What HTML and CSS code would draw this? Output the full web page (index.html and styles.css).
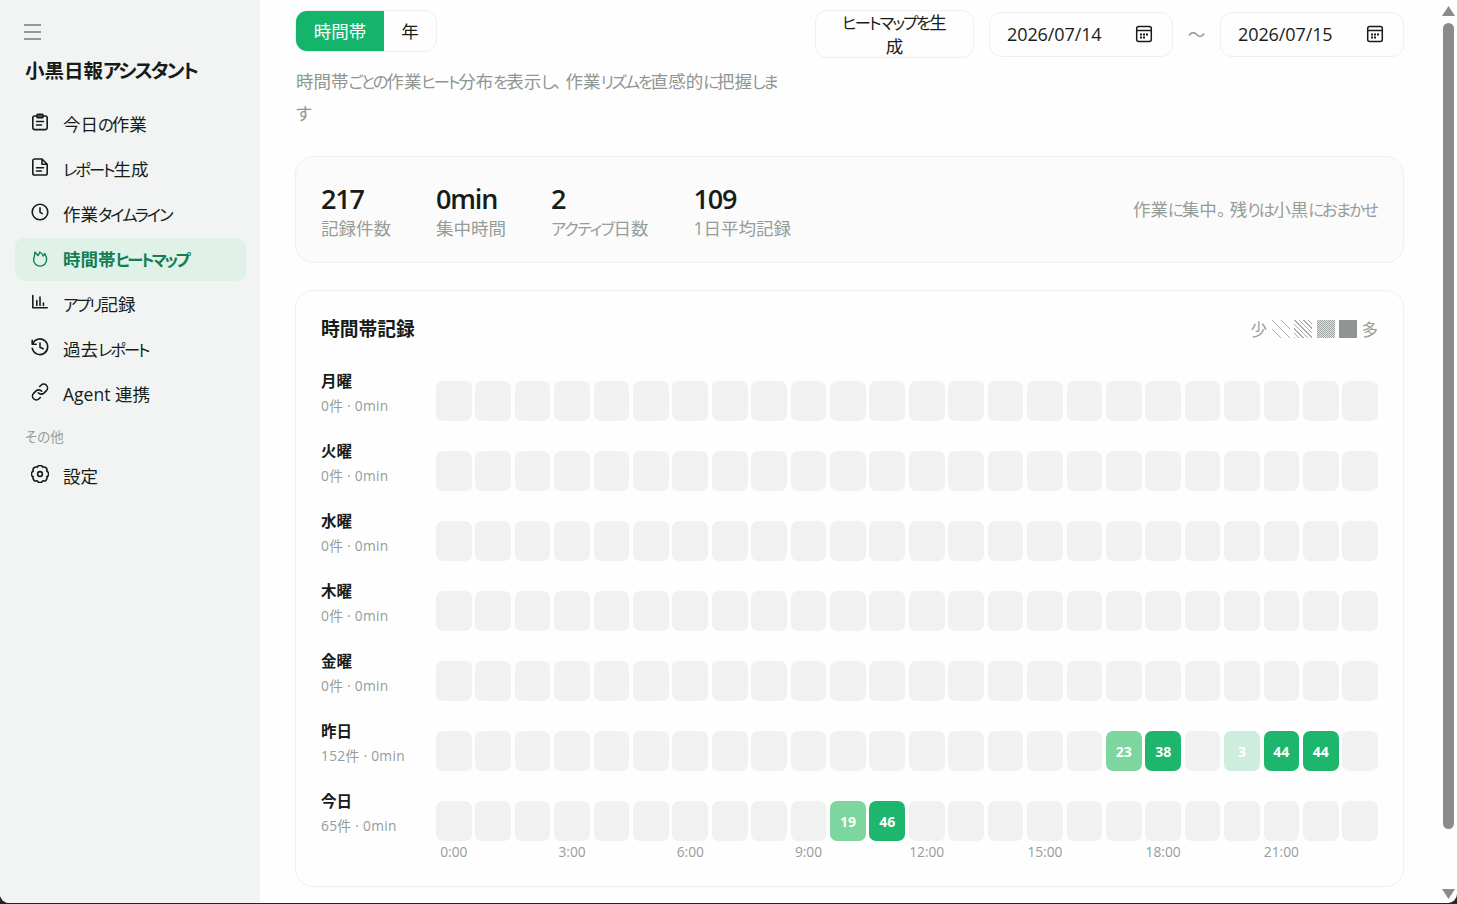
FILE: index.html
```html
<!DOCTYPE html>
<html lang="ja">
<head>
	<meta charset="utf-8">
	<meta name="viewport" content="width=device-width, initial-scale=1">
	<title>小黒日報アシスタント</title>
	<link rel="stylesheet" href="styles.css">
</head>
<body>
<div class="window">
	<aside class="sidebar">
		<button class="menu-btn"><i></i><i></i><i></i></button>
		<h1 class="brand">小黒日報<span class="kana">アシスタント</span></h1>
		<nav class="nav">
			<a class="nav-item">
				<svg class="icon" viewBox="0 0 18 18"><rect x="1.8" y="3" width="14.4" height="13.6" rx="2"/><rect x="6" y="1.2" width="6" height="3.6" rx=".8"/><path d="M5.5 8.5h7M5.5 12h5"/></svg>
				<span>今日<span class="kana">の</span>作業</span>
			</a>
			<a class="nav-item">
				<svg class="icon" viewBox="0 0 18 18"><path d="M11 1H3.6a1.8 1.8 0 0 0-1.8 1.8v12.4A1.8 1.8 0 0 0 3.6 17h10.8a1.8 1.8 0 0 0 1.8-1.8V6.2zM11 1v5.2h5.2M5.5 9.8h7M5.5 13h5"/></svg>
				<span><span class="kana">レポート</span>生成</span>
			</a>
			<a class="nav-item">
				<svg class="icon" viewBox="0 0 18 18"><circle cx="9" cy="9" r="7.8"/><path d="M9 4.8v4.4l2.2 1.4"/></svg>
				<span>作業<span class="kana">タイムライン</span></span>
			</a>
			<a class="nav-item active">
				<svg class="icon" viewBox="0 0 18 18"><path d="M3.8 2.200C5.300 3.200 6.200 4.200 6.800 5.600C8 4.800 8.600 3.600 8.800 2C10.600 3 11.700 4.300 12.200 6C13 5.400 13.400 4.600 13.500 3.500C15 5.400 15.600 7.400 15.600 9.600a6.500 6.500 0 0 1-13 0C2.600 8 3.900 6.500 3.800 2.200z"/></svg>
				<span>時間帯<span class="kana">ヒートマップ</span></span>
			</a>
			<a class="nav-item">
				<svg class="icon" viewBox="0 0 18 18"><path d="M1.800 2.500v12.200h14.400M5.800 7.500v5M9 4v8.500M12.400 10v2.500"/></svg>
				<span><span class="kana">アプリ</span>記録</span>
			</a>
			<a class="nav-item">
				<svg class="icon" viewBox="0 0 18 18"><path d="M1.200 2.200v4h4M1.500 6.200a7.800 7.800 0 1 1-.3 4M9 5v4.300l3 1.500"/></svg>
				<span>過去<span class="kana">レポート</span></span>
			</a>
			<a class="nav-item">
				<svg class="icon" viewBox="0 0 18 18"><path d="M7.300 9.800a3.900 3.900 0 0 0 5.600.3l2.500-2.500a3.800 3.800 0 0 0-5.400-5.400L8.700 3.500M10.700 8.200a3.900 3.900 0 0 0-5.600-.3l-2.500 2.500a3.800 3.800 0 0 0 5.400 5.400l1.300-1.300"/></svg>
				<span>Agent 連携</span>
			</a>
		</nav>
		<div class="nav-group">その他</div>
		<nav class="nav">
			<a class="nav-item">
				<svg class="icon" viewBox="0 0 18 18"><path d="M15.740 6.210A3 3 0 0 1 15.740 11.790A3 3 0 0 1 11.790 15.740A3 3 0 0 1 6.210 15.740A3 3 0 0 1 2.260 11.790A3 3 0 0 1 2.260 6.210A3 3 0 0 1 6.210 2.260A3 3 0 0 1 11.790 2.260A3 3 0 0 1 15.740 6.210z"/><circle cx="9" cy="9" r="2.400"/></svg>
				<span>設定</span>
			</a>
		</nav>
	</aside>

	<main class="main">
		<header class="header">
			<div class="intro">
				<div class="tabs">
					<button class="tab on">時間帯</button>
					<button class="tab">年</button>
				</div>
				<p class="desc">時間帯<span class="kana">ごとの</span>作業<span class="kana">ヒート</span>分布<span class="kana">を</span>表示<span class="kana">し</span><span class="punct">、</span>作業<span class="kana">リズムを</span>直感的<span class="kana">に</span>把握<span class="kana">しま</span><br>す</p>
			</div>
			<div class="tools">
				<button class="make-btn"><span class="kana">ヒートマップを</span>生<br>成</button>
				<div class="date">
					<span>2026/07/14</span>
					<svg class="cal" viewBox="0 0 18 18"><rect x="1.700" y="1.500" width="14.600" height="15" rx="2"/><path d="M2 5.500h14"/><path class="dots" d="M5 9.500h2M8 9.500h2M11 9.500h2M5 12.500h2M8 12.500h2"/></svg>
				</div>
				<span class="tilde">～</span>
				<div class="date">
					<span>2026/07/15</span>
					<svg class="cal" viewBox="0 0 18 18"><rect x="1.700" y="1.500" width="14.600" height="15" rx="2"/><path d="M2 5.500h14"/><path class="dots" d="M5 9.500h2M8 9.500h2M11 9.500h2M5 12.500h2M8 12.500h2"/></svg>
				</div>
			</div>
		</header>

		<section class="card stats">
			<div class="stat"><b>217</b><span>記録件数</span></div>
			<div class="stat"><b>0min</b><span>集中時間</span></div>
			<div class="stat"><b>2</b><span><span class="kana">アクティブ</span>日数</span></div>
			<div class="stat"><b>109</b><span>1日平均記録</span></div>
			<p class="slogan">作業<span class="kana">に</span>集中<span class="punct">。</span>残<span class="kana">りは</span>小黒<span class="kana">におまかせ</span></p>
		</section>

		<section class="card heat">
			<div class="heat-head">
				<h2>時間帯記録</h2>
				<div class="legend">
					<span>少</span>
					<i class="lv lv1"></i><i class="lv lv2"></i><i class="lv lv3"></i><i class="lv lv4"></i>
					<span>多</span>
				</div>
			</div>
			<div id="rows"></div>
			<div class="axis" id="axis"></div>
		</section>
	</main>

	<div class="scrollbar">
		<i class="arrow up"></i>
		<i class="thumb"></i>
		<i class="arrow down"></i>
	</div>
</div>
<script type="text/javascript">
	var days = [
		{ name: '月曜', count: 0, hours: {} },
		{ name: '火曜', count: 0, hours: {} },
		{ name: '水曜', count: 0, hours: {} },
		{ name: '木曜', count: 0, hours: {} },
		{ name: '金曜', count: 0, hours: {} },
		{ name: '昨日', count: 152, hours: { 17: 23, 18: 38, 20: 3, 21: 44, 22: 44 } },
		{ name: '今日', count: 65, hours: { 10: 19, 11: 46 } }
	];

	function level(n)
	{
		if (n > 30) return 'high';
		if (n > 10) return 'mid';
		return 'low';
	}

	var html = '';
	days.forEach(function (day) {
		html += '<div class="row"><div class="day"><b>' + day.name + '</b><span>' + day.count + '件 · 0min</span></div><div class="cells">';
		for (var h = 0; h < 24; h++)
		{
			var n = day.hours[h];
			html += n ? '<div class="cell ' + level(n) + '">' + n + '</div>' : '<div class="cell"></div>';
		}
		html += '</div></div>';
	});
	document.getElementById('rows').innerHTML = html;

	var axis = '';
	for (var h = 0; h < 24; h++)
		axis += '<span>' + (h % 3 == 0 ? h + ':00' : '') + '</span>';
	document.getElementById('axis').innerHTML = axis;
</script>
</body>
</html>
```
FILE: styles.css
```css
* {
	box-sizing: border-box;
}
html, body {
	margin: 0;
	height: 100%;
	overflow: hidden;
	background: #262626;
}
body {
	font-family: "Open Sans", "Noto Sans CJK JP", sans-serif;
	font-size: 17.5px;
	color: #171c19;
	font-feature-settings: "palt";
}
button {
	font: inherit;
	color: inherit;
	padding: 0;
	border: 0;
	background: none;
}
b, h1, h2, p {
	margin: 0;
	font-weight: 600;
}
p {
	font-weight: 400;
}
.kana {
	font-size: .93em;
	letter-spacing: -1.4px;
}
.punct {
	margin-right: 4px;
}
.window {
	display: flex;
	height: 903px;
	background: #fefefe;
	border-radius: 0 0 9px 9px;
	overflow: hidden;
}

/* sidebar */
.sidebar {
	width: 260px;
	flex: none;
	padding: 24px 14px 0 15px;
	background: #f1f4f3;
}
.menu-btn {
	display: flex;
	flex-direction: column;
	gap: 5px;
	margin-left: 9px;
}
.menu-btn i {
	width: 17px;
	height: 2px;
	background: #969b98;
}
.brand {
	margin: 15px 0 0 10px;
	font-size: 19.5px;
	line-height: 31px;
	white-space: nowrap;
}
.brand .kana {
	font-size: 1em;
	letter-spacing: -2px;
}
.nav {
	display: flex;
	flex-direction: column;
	gap: 2px;
}
.brand + .nav {
	margin-top: 17px;
}
.nav-item {
	display: flex;
	align-items: center;
	height: 43px;
	padding: 0 0 3px 16px;
	gap: 14px;
	border-radius: 9px;
	white-space: nowrap;
}
.nav-item .kana {
	letter-spacing: -2px;
}
.nav-item.active {
	background: #e0f2e8;
	color: #147e53;
	font-weight: 600;
}
.nav-item.active .kana {
	letter-spacing: -2.5px;
}
.icon {
	width: 18px;
	height: 18px;
	margin-top: -2px;
	fill: none;
	stroke: currentColor;
	stroke-width: 1.6;
	stroke-linejoin: round;
	stroke-linecap: round;
}
.active .icon {
	margin-top: 1px;
	stroke-width: 1.4;
}
.nav-group {
	margin: 11px 0 8px 10px;
	font-size: 13.5px;
	line-height: 20px;
	color: #969d99;
}

/* header */
.main {
	flex: 1;
	min-width: 0;
	padding: 10px 36px 0 35px;
}
.header {
	display: flex;
	justify-content: space-between;
	height: 146px;
}
.tabs {
	display: flex;
	width: 142px;
	height: 42px;
	border: 1px solid #efefef;
	border-radius: 12px;
	overflow: hidden;
}
.tab {
	width: 52px;
	padding-bottom: 1px;
}
.tab.on {
	width: 88px;
	background: #14b56a;
	color: #fff;
}
.desc {
	margin: 14px 0 0 1px;
	line-height: 31px;
	color: #8f9692;
	white-space: nowrap;
}
.desc .kana {
	letter-spacing: -2.1px;
}
.tools {
	display: flex;
	align-items: flex-start;
}
.make-btn {
	width: 159px;
	height: 48px;
	margin-right: 15px;
	border: 1px solid #efefef;
	border-radius: 12px;
	line-height: 23px;
}
.make-btn .kana {
	letter-spacing: -1.9px;
}
.date {
	display: flex;
	align-items: center;
	justify-content: space-between;
	width: 184px;
	height: 45px;
	margin-top: 2px;
	padding: 0 19px 1px 17px;
	border: 1px solid #efefef;
	border-radius: 12px;
}
.date span {
	font-size: 18px;
	letter-spacing: -.1px;
}
.cal {
	width: 18px;
	height: 18px;
	fill: none;
	stroke: #171c19;
	stroke-width: 1.5;
}
.cal .dots {
	stroke-width: 2;
}
.tilde {
	width: 47px;
	margin-top: 11px;
	text-align: center;
	color: #969d99;
}

/* cards */
.card {
	border: 1px solid #efefef;
	border-radius: 18px;
	padding: 25px;
}
.stats {
	display: flex;
	height: 107px;
	background: #fbfbfb;
}
.stat {
	display: flex;
	flex-direction: column;
	margin-right: 45px;
	color: #969d99;
	white-space: nowrap;
}
.stat b {
	font-size: 27px;
	line-height: 33px;
	padding-bottom: 1px;
	letter-spacing: -1.2px;
	color: #171c19;
}
.stat > span {
	line-height: 24px;
}
.slogan {
	margin: 0 1px 0 auto;
	line-height: 54px;
	color: #969d99;
	white-space: nowrap;
}
.slogan .kana {
	letter-spacing: -1.8px;
}
.heat {
	height: 597px;
	margin-top: 27px;
}
.heat-head {
	display: flex;
	justify-content: space-between;
	align-items: center;
	height: 24px;
	margin-bottom: 29px;
}
.heat-head h2 {
	font-size: 18.75px;
	padding-bottom: 1px;
}
.legend {
	display: flex;
	align-items: center;
	gap: 4.5px;
	padding-top: 2px;
	color: #969d99;
	font-size: 16.5px;
}
.lv {
	width: 18px;
	height: 18px;
}
.lv1 {
	background: repeating-linear-gradient(45deg, #a9aeab 0 .7px, transparent .7px 6.36px);
}
.lv2 {
	background: repeating-linear-gradient(45deg, #a9aeab 0 .8px, transparent .8px 3.18px);
}
.lv3 {
	background: repeating-conic-gradient(#a0a6a2 0 25%, #e0e2e1 0 50%) 0 0 / 2px 2px;
}
.lv4 {
	background: #8f9692;
}
.row {
	display: flex;
	height: 70px;
}
.day {
	width: 115px;
	flex: none;
	display: flex;
	flex-direction: column;
}
.day b {
	font-size: 15.5px;
	line-height: 25px;
}
.day span {
	font-size: 13.75px;
	line-height: 24px;
	letter-spacing: .3px;
	color: #969d99;
}
.cells, .axis {
	display: grid;
	grid-template-columns: repeat(24, minmax(0, 1fr));
	column-gap: 3.75px;
	flex: 1;
}
.cells {
	padding-top: 12px;
}
.cell {
	height: 40px;
	border-radius: 7px;
	background: #f1f1f1;
	color: #fff;
	font-size: 14px;
	font-weight: 700;
	line-height: 41px;
	text-align: center;
}
.low {
	background: #cdeedc;
}
.mid {
	background: #7dd69d;
}
.high {
	background: #1eb66d;
}
.axis {
	margin: -17px 0 0 115px;
	font-size: 13.75px;
	line-height: 20px;
	color: #969d99;
}
.axis span {
	display: flex;
	justify-content: center;
	white-space: nowrap;
}

/* scrollbar */
.scrollbar {
	display: flex;
	flex-direction: column;
	align-items: center;
	width: 17px;
	padding: 6px 0 4px;
}
.thumb {
	width: 11px;
	height: 806px;
	margin: 7px 0 60px;
	border-radius: 6px;
	background: #8b8b8b;
}
.arrow {
	width: 13px;
	height: 10px;
	background: #8b8b8b;
	clip-path: polygon(50% 0, 100% 100%, 0 100%);
}
.arrow.down {
	clip-path: polygon(0 0, 100% 0, 50% 100%);
}
```
